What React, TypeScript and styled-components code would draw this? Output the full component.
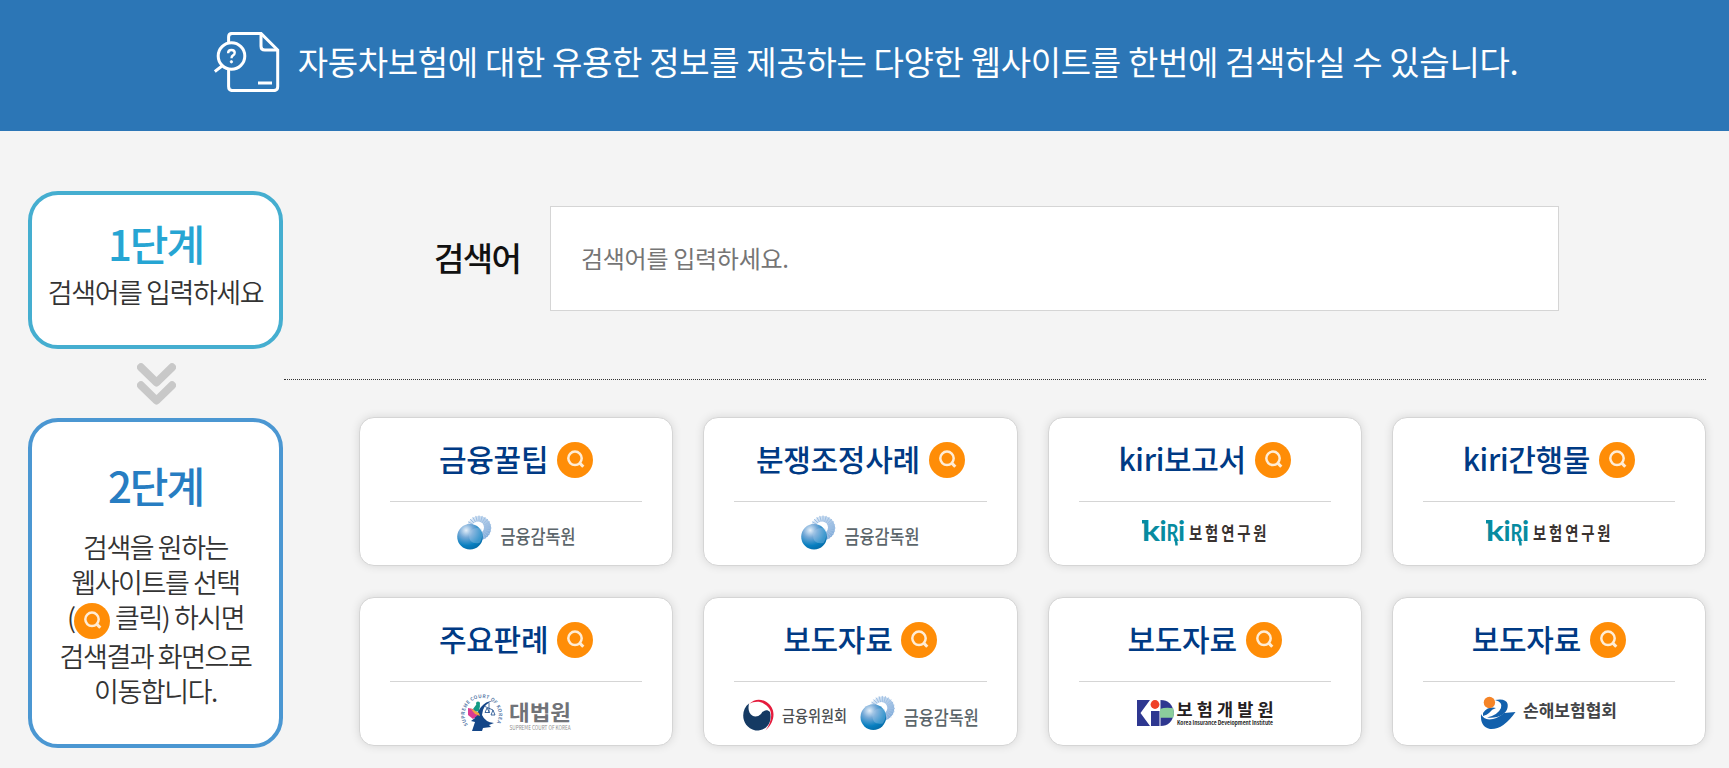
import styled, { createGlobalStyle } from "styled-components";

const GlobalStyle = createGlobalStyle`
  * {
    box-sizing: border-box;
  }
  body {
    margin: 0;
    background-color: #f4f4f4;
    font-family: "Noto Sans CJK KR", "Noto Sans", sans-serif;
    color: #333;
  }
`;

const Banner = styled.header`
  display: flex;
  justify-content: center;
  height: 131px;
  padding: 32px 0 0 3px;
  background-color: #2c76b6;
`;
const BannerText = styled.p`
  margin: -1px 0 0 18px;
  color: #fff;
  font-size: 33px;
  font-weight: 400;
  line-height: 60px;
  letter-spacing: -0.01em;
  white-space: nowrap;
`;
const Page = styled.main`
  display: flex;
  padding: 60px 23px 19px 28px;
`;
const Steps = styled.aside`
  display: flex;
  flex-direction: column;
  align-items: center;
  flex: none;
  width: 255px;
`;
const StepBox = styled.section<{ $color: string; $height: number; $top: number }>`
  width: 100%;
  height: ${(props) => props.$height}px;
  padding-top: ${(props) => props.$top}px;
  border: 4px solid ${(props) => props.$color};
  border-radius: 30px;
  background-color: #fff;
  text-align: center;
`;
const StepTitle = styled.h2<{ $color: string; $gap: number }>`
  margin: 0 0 ${(props) => props.$gap}px;
  color: ${(props) => props.$color};
  font-size: 42px;
  font-weight: 500;
  line-height: 50px;
  letter-spacing: -0.05em;
`;
const StepText = styled.p`
  margin: 0;
  font-size: 27px;
  font-weight: 350;
  line-height: 35px;
  letter-spacing: -0.053em;
  white-space: nowrap;
`;
const ArrowIcon = styled.svg`
  display: block;
  margin: 14px 0 13px 2px;
`;
const Content = styled.div`
  flex: 1;
  margin-left: 1px;
`;
const SearchRow = styled.div`
  display: flex;
  align-items: center;
  height: 189px;
  padding: 0 147px 53px 150px;
  border-bottom: 1px dotted #333;
`;
const SearchLabel = styled.label`
  width: 116px;
  padding-bottom: 4px;
  color: #111;
  font-size: 33px;
  font-weight: 500;
  letter-spacing: -0.05em;
`;
const SearchInput = styled.input`
  flex: 1;
  height: 105px;
  padding: 0 30px 3px;
  border: 1px solid #d5d5d5;
  background-color: #fff;
  font-family: inherit;
  font-size: 24px;
  letter-spacing: -0.012em;

  &::placeholder {
    color: #757575;
    opacity: 1;
  }
`;
const CardGrid = styled.div`
  display: grid;
  grid-template-columns: repeat(4, 1fr);
  gap: 31px 30px;
  padding: 37px 0 0 75px;
`;
const Card = styled.article`
  height: 149px;
  padding: 0 30px;
  border: 1px solid #d5d5d5;
  border-radius: 15px;
  background-color: #fff;
  box-shadow: 0 0 10px rgba(0, 0, 0, 0.12);
`;
const CardHead = styled.div`
  display: flex;
  align-items: center;
  justify-content: center;
  gap: 9px;
  height: 84px;
  border-bottom: 1px solid #d5d5d5;
`;
const CardTitle = styled.h3`
  margin: 0;
  padding-bottom: 3px;
  color: #003a84;
  font-size: 30px;
  font-weight: 500;
  letter-spacing: -0.01em;
  white-space: nowrap;
`;
const CardLogo = styled.div`
  display: flex;
  justify-content: center;
  padding-top: 11px;
`;
const LogoSvg = styled.svg`
  display: block;
  overflow: visible;
`;
const SearchSvg = styled.svg<{ $inline?: boolean }>`
  display: ${(props) => (props.$inline ? "inline-block" : "block")};
  flex: none;
  margin-bottom: ${(props) => (props.$inline ? "-1px" : "0")};
  vertical-align: middle;
`;

const SearchIcon = ({ inline }: { inline?: boolean }) => (
  <SearchSvg $inline={inline} width="36" height="36" viewBox="0 0 36 36">
    <circle cx="18" cy="18" r="18" fill="#ff8d07" />
    <g fill="none" stroke="#ffedd6" strokeWidth="2.5">
      <circle cx="18" cy="16.3" r="6.7" />
      <path d="M22.3 20.6 26.3 24.8" strokeWidth="3" />
    </g>
  </SearchSvg>
);

const BannerIcon = () => (
  <svg width="66" height="60" viewBox="0 0 66 60" fill="none" stroke="#fff" strokeWidth="3">
    <path d="M14.6 10V5q0-3.6 3.6-3.6H47L63.7 18v36.6q0 4-4 4H18.5q-3.9 0-3.9-4V37.5" />
    <path d="M47 1.5v12.7q0 3.8 3.8 3.8h12.7" />
    <circle cx="17.5" cy="24" r="13.3" />
    <path d="M8 34 .8 39.5M44 51h14" />
    <path d="M14.1 21.2q0-3.2 3.3-3.2t3.3 2.8q0 1.7-1.7 2.6-1.5.8-1.5 2.8" strokeWidth="2.4" />
    <circle cx="17.4" cy="29.8" r="1.2" fill="#fff" strokeWidth=".8" />
  </svg>
);

const Rays = () => (
  <>
    {Array.from({ length: 24 }, (_, i) => {
      const angle = (i * Math.PI) / 12;
      return (
        <line
          key={i}
          x1={22 + Math.cos(angle) * 5.5}
          y1={15 + Math.sin(angle) * 5.5}
          x2={22 + Math.cos(angle) * 12.5}
          y2={15 + Math.sin(angle) * 12.5}
        />
      );
    })}
  </>
);

const FssMark = () => (
  <>
    <defs>
      <radialGradient id="fssBall" cx=".35" cy=".25" r=".8">
        <stop offset="0" stopColor="#e4eff9" />
        <stop offset=".35" stopColor="#75a9d7" />
        <stop offset=".75" stopColor="#087fc0" />
        <stop offset="1" stopColor="#056ca8" />
      </radialGradient>
      <linearGradient id="fssHalo" x2="1" y2="1">
        <stop offset=".1" stopColor="#e3edf8" />
        <stop offset="1" stopColor="#6f9fd4" />
      </linearGradient>
    </defs>
    <circle cx="22" cy="15" r="12" fill="url(#fssHalo)" />
    <g stroke="#9dbfe3" strokeWidth="1">
      <Rays />
    </g>
    <circle cx="21" cy="14.5" r="6" fill="#fff" />
    <circle cx="13" cy="23.7" r="12.8" fill="url(#fssBall)" />
    <path d="M12 22q2-9 12.5-6.5 2.5 8-2 14.5Q12 32 12 22" fill="#a6cbea" opacity=".35" />
    <text x="43.5" y="31.2" textLength="75" lengthAdjust="spacingAndGlyphs" fontSize="19.5" fontWeight="500" fill="#5c666b">
      금융감독원
    </text>
  </>
);

const FssLogo = () => (
  <LogoSvg width="119" height="40">
    <FssMark />
  </LogoSvg>
);

const KiriLogo = () => (
  <LogoSvg width="125" height="40">
    <g fill="#078ba0" fontFamily="Lato, sans-serif" fontWeight="700">
      <path d="M0 7h4v3.5H0z" />
      <text x="0" y="28.3" fontSize="29" textLength="18" lengthAdjust="spacingAndGlyphs">k</text>
      <text x="17.5" y="28.3" fontSize="28">i</text>
      <text x="36" y="28.3" fontSize="28">i</text>
      <text x="24.5" y="28.3" fontSize="22" textLength="12" lengthAdjust="spacingAndGlyphs">R</text>
      <path d="M32.5 26q2 1.5 2 6.5" fill="none" stroke="#078ba0" strokeWidth="2.5" />
    </g>
    <text transform="translate(47 26.7) scale(.8 1)" textLength="97" fontSize="18" fontWeight="700" fill="#3a3331">
      보험연구원
    </text>
  </LogoSvg>
);

const CourtLogo = () => (
  <LogoSvg width="109" height="40">
    <path id="courtRing" d="M6 32A17 17 0 1 1 34 31" fill="none" />
    <text fontSize="4.8" fontWeight="700" fill="#587aa8">
      <textPath href="#courtRing" textLength="72">SUPREME COURT OF KOREA</textPath>
    </text>
    <g fill="#144688">
      <path d="M15 20 19 14q5-6 11-6-7 3-9 9l-1 5q3 7 12 8l-5 2 2 2-8 1-1 3H10l3-9-4-1 4-3-3-2 5-1z" />
    </g>
    <g fill="none" stroke="#144688" strokeWidth=".8">
      <path d="M23 13.5 31 17M27 10v10M25 15l-2 4.5h4.5zM31 17l-2 5h4z" />
    </g>
    <path d="m11 16 3-4 3-3 1 4-1 5-4 1z" fill="#149b85" />
    <circle cx="16" cy="10.5" r="2" fill="#149b85" />
    <path d="m6 15 5 1 5 6-5 4-5-4z" fill="#dc3b92" />
    <path d="m8 15 9 5 1 3-5-2z" fill="#f3a343" />
    <text x="47" y="26.5" textLength="62" lengthAdjust="spacingAndGlyphs" fontSize="21" fontWeight="700" fill="#717378">
      대법원
    </text>
    <text x="47.5" y="36.8" textLength="61" lengthAdjust="spacingAndGlyphs" fontSize="5.5" fill="#8d8d8d">
      SUPREME COURT OF KOREA
    </text>
  </LogoSvg>
);

const PressLogo = () => (
  <LogoSvg width="237" height="40">
    <path
      d="M7 10.5C-2 17-1 34 13.5 37.5 25 38 30.5 29 28 19 25 15.500 21 17.500 19 21 15 25 10 24 7.500 19.500 6 16 6.500 13 7 10.5Z"
      fill="#153a63"
    />
    <path d="M7 11Q15 3.500 24.500 9C34 15 34 28 23.500 37.5 30 29 31 19 26 14 20 7.5 13 8 7 11Z" fill="#e51b3c" />
    <text x="40" y="28.5" textLength="65" lengthAdjust="spacingAndGlyphs" fontSize="15.5" fontWeight="500" fill="#4b4e51">
      금융위원회
    </text>
    <g transform="translate(118.3 .4)">
      <FssMark />
    </g>
  </LogoSvg>
);

const KidLogo = () => (
  <LogoSvg width="136" height="40">
    <path d="M0 7h13L3.5 20 13 33H0z" fill="#2e3790" />
    <path d="M14 18h8.5v15H14z" fill="#2e3790" />
    <path d="M23.5 7Q35 7 37 20 35 33 23.5 33z" fill="#2e3790" />
    <path d="M23 16q5-2 13.3-.8 1.4 4.8 0 9.5H23z" fill="#8bce9c" />
    <circle cx="18" cy="11.5" r="4.4" fill="#ef4128" />
    <text x="39.5" y="22.8" textLength="97" fontSize="17.5" fontWeight="700" fill="#25201f">
      보험개발원
    </text>
    <text x="40" y="31.8" textLength="96" lengthAdjust="spacingAndGlyphs" fontSize="5.5" fontWeight="700" fill="#222">
      Korea Insurance Development Institute
    </text>
  </LogoSvg>
);

const KniaLogo = () => (
  <LogoSvg width="136" height="40">
    <g fill="#1260ac">
      <path d="M14 7q11-2 12.6 4Q28 20 16 24q-5 1-10 .5Q17 22 20 15q2-6-6-8" />
      <path d="M2 20q5-7 13-5-4 1-7 5-2 2-6 3z" />
      <path d="M0 21q3 7 12 5 5-1 11-6l11.5-1Q22 37 9 36-1 34 0 21" />
    </g>
    <circle cx="8.4" cy="9.5" r="5.7" fill="#f58427" />
    <text x="42" y="24.3" textLength="94" lengthAdjust="spacingAndGlyphs" fontSize="17" fontWeight="700" fill="#424346">
      손해보험협회
    </text>
  </LogoSvg>
);

const sites = [
  { title: "금융꿀팁", Logo: FssLogo },
  { title: "분쟁조정사례", Logo: FssLogo },
  { title: "kiri보고서", Logo: KiriLogo },
  { title: "kiri간행물", Logo: KiriLogo },
  { title: "주요판례", Logo: CourtLogo },
  { title: "보도자료", Logo: PressLogo },
  { title: "보도자료", Logo: KidLogo },
  { title: "보도자료", Logo: KniaLogo },
];

export default function App() {
  return (
    <>
      <GlobalStyle />
      <Banner>
        <BannerIcon />
        <BannerText>
          자동차보험에 대한 유용한 정보를 제공하는 다양한 웹사이트를 한번에 검색하실 수 있습니다.
        </BannerText>
      </Banner>
      <Page>
        <Steps>
          <StepBox $color="#45aed0" $height={158} $top={23}>
            <StepTitle $color="#26a5d3" $gap={6}>1단계</StepTitle>
            <StepText>검색어를 입력하세요</StepText>
          </StepBox>
          <ArrowIcon width="39" height="42" viewBox="0 0 39 42" fill="none" stroke="#c8c8c8" strokeWidth="8" strokeLinecap="round" strokeLinejoin="round">
            <path d="M4 4.3 19.5 19.5 35 4.3M4 22.3 19.5 37.5 35 22.3" />
          </ArrowIcon>
          <StepBox $color="#4b97d2" $height={330} $top={38}>
            <StepTitle $color="#277dc2" $gap={19}>2단계</StepTitle>
            <StepText>
              검색을 원하는
              <br />
              웹사이트를 선택
              <br />
              (<SearchIcon inline /> 클릭) 하시면
              <br />
              검색결과 화면으로
              <br />
              이동합니다.
            </StepText>
          </StepBox>
        </Steps>
        <Content>
          <SearchRow>
            <SearchLabel htmlFor="keyword">검색어</SearchLabel>
            <SearchInput id="keyword" placeholder="검색어를 입력하세요." />
          </SearchRow>
          <CardGrid>
            {sites.map(({ title, Logo }, index) => (
              <Card key={index}>
                <CardHead>
                  <CardTitle>{title}</CardTitle>
                  <SearchIcon />
                </CardHead>
                <CardLogo>
                  <Logo />
                </CardLogo>
              </Card>
            ))}
          </CardGrid>
        </Content>
      </Page>
    </>
  );
}
